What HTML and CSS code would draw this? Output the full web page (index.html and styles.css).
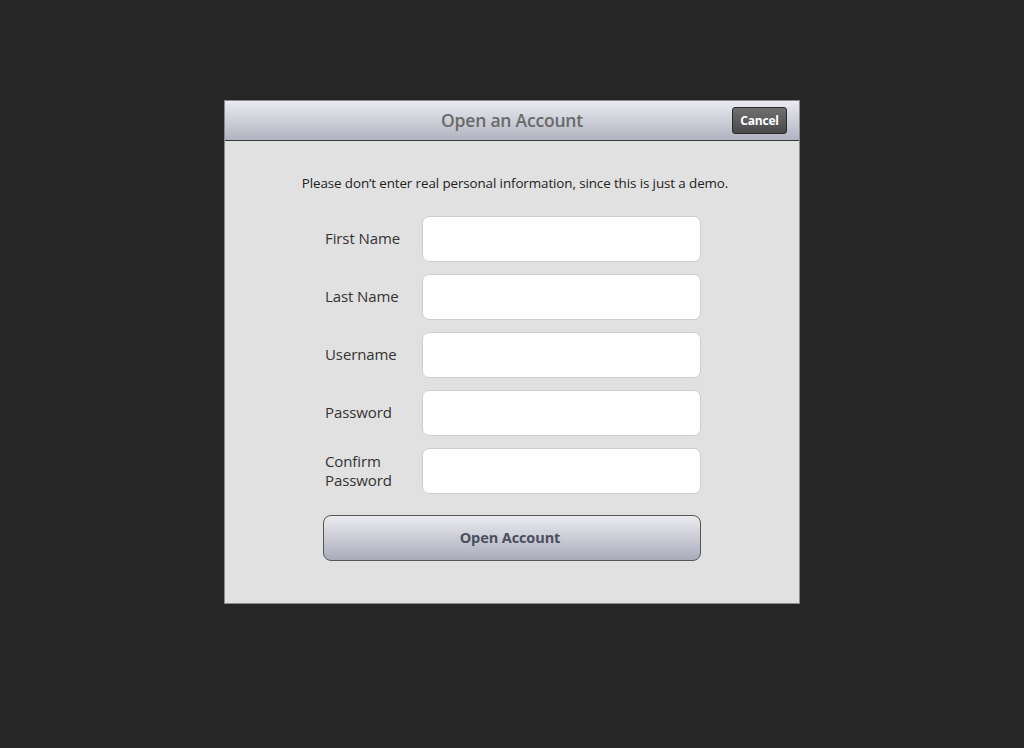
FILE: index.html
```html
<!DOCTYPE html>
<html>
<head>
<meta charset="utf-8">
<link rel="stylesheet" href="styles.css">
</head>
<body>
<div class="dialog">
  <div class="header">
    <div class="title">Open an Account</div>
    <button class="cancel">Cancel</button>
  </div>
  <div class="content">
    <p class="notice">Please don’t enter real personal information, since this is just a demo.</p>
    <form class="form">
      <div class="row"><label>First Name</label><input class="field" type="text"></div>
      <div class="row"><label>Last Name</label><input class="field" type="text"></div>
      <div class="row"><label>Username</label><input class="field" type="text"></div>
      <div class="row"><label>Password</label><input class="field" type="password"></div>
      <div class="row"><label class="two-line">Confirm<br>Password</label><input class="field" type="password"></div>
      <button type="button" class="submit">Open Account</button>
    </form>
  </div>
</div>
</body>
</html>
```
FILE: styles.css
```css
html, body {
  margin: 0;
  padding: 0;
  background: #262626;
  font-family: "Open Sans", "Noto Sans", sans-serif;
}
.dialog {
  width: 574px;
  margin: 100px auto 0;
  border: 1px solid #8a8a8a;
  background: #e1e1e1;
}
.header {
  position: relative;
  height: 39px;
  border-bottom: 1px solid #3a3a3a;
  background: linear-gradient(#ebecf0, #b0b2c0);
  display: flex;
  align-items: center;
  justify-content: center;
}
.title {
  padding-bottom: 2px;
  font-size: 17.5px;
  font-weight: 600;
  color: #6a6a6a;
  letter-spacing: -0.2px;
}
.cancel {
  position: absolute;
  right: 12px;
  top: 6px;
  width: 55px;
  height: 27px;
  padding: 0;
  border: 1px solid #2a2a2a;
  border-radius: 3px;
  background: linear-gradient(#707070, #4a4a4a);
  color: #fff;
  font-family: inherit;
  font-size: 12px;
  font-weight: 700;
  letter-spacing: -0.2px;
}
.content {
  padding: 33px 0 42px;
}
.notice {
  margin: 0 0 24px;
  text-align: center;
  font-size: 13.4px;
  line-height: 18px;
  color: #222;
  padding-left: 6px;
  letter-spacing: -0.1px;
}
.form {
  width: 378px;
  margin: 0 auto;
  display: flex;
  flex-direction: column;
  gap: 12px;
}
.row {
  display: flex;
  align-items: center;
}
.row label {
  width: 97px;
  padding: 0 0 2px 2px;
  font-size: 15px;
  line-height: 19px;
  color: #333;
  letter-spacing: -0.1px;
}
.row label.two-line {
  padding-bottom: 0;
}
.field {
  box-sizing: border-box;
  width: 279px;
  height: 46px;
  margin: 0;
  border: 1px solid #cdcdcd;
  border-radius: 7px;
  background: #fff;
  outline: none;
}
.submit {
  margin-top: 9px;
  box-sizing: border-box;
  width: 378px;
  height: 46px;
  padding: 0 4px 2px 0;
  border: 1px solid #555;
  border-radius: 8px;
  background: linear-gradient(#ebecf0, #a9abba);
  color: #4a4f5e;
  font-family: inherit;
  font-size: 14.5px;
  font-weight: 700;
  letter-spacing: -0.1px;
}
```
